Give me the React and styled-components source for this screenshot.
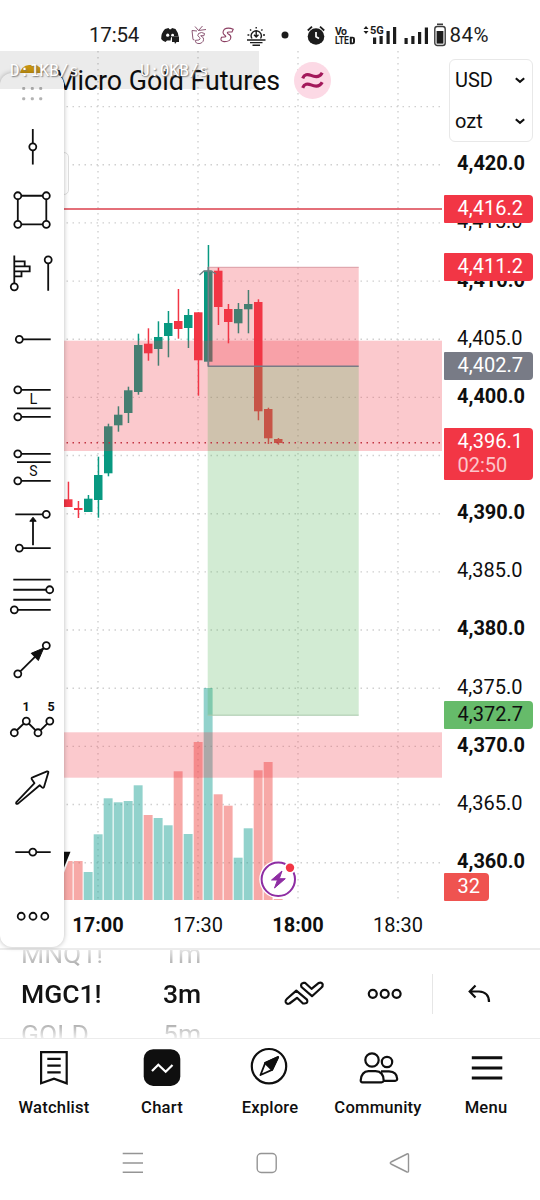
//App.jsx
import styled, { createGlobalStyle, css } from "styled-components";

const GlobalStyle = createGlobalStyle`
	* { box-sizing: border-box; }
	body {
		margin: 0;
		background-color: #fff;
		color: #0f0f0f;
		font-family: Roboto, "Liberation Sans", sans-serif;
	}
	svg { display: block; }
`;

const Screen = styled.div`
	width: 540px;
	height: 1200px;
	display: flex;
	flex-direction: column;
	overflow: hidden;
	background-color: #fff;
`;

/* ---------- status bar ---------- */

const StatusRow = styled.div`
	height: 51px;
	flex: none;
	display: flex;
	align-items: center;
	padding: 18px 0 0 88px;
	color: #1c1c1c;
`;

const StatusText = styled.span`
	font-size: 20.5px;
	line-height: 24px;
	width: ${({ $w }) => $w}px;
	margin-left: ${({ $gap }) => $gap || 0}px;
	letter-spacing: ${({ $ls }) => $ls || 0}px;
	white-space: nowrap;
`;

const StatusIcon = styled.svg`
	flex: none;
	height: 30px;
	width: ${({ $w }) => $w}px;
	margin-left: ${({ $gap }) => $gap || 0}px;
	overflow: visible;
`;

/* ---------- chart ---------- */

const ChartArea = styled.div`
	position: relative;
	height: 897px;
	flex: none;
	display: flex;
`;

const PlotColumn = styled.div`
	width: 442px;
	flex: none;
	display: flex;
	flex-direction: column;
`;

const TimeAxis = styled.div`
	flex: 1;
	display: flex;
	padding: 13px 0 0 48px;
`;

const TimeLabel = styled.span`
	width: 100px;
	flex: none;
	text-align: center;
	font-size: 20px;
	line-height: 24px;
	font-weight: ${({ $bold }) => ($bold ? 700 : 400)};
`;

const PriceAxis = styled.div`
	position: relative;
	flex: 1;
	display: flex;
	flex-direction: column;
	padding-top: 8px;
`;

const UnitBox = styled.div`
	height: 83px;
	width: 84px;
	margin-left: 7px;
	margin-bottom: 9.2px;
	padding: 0 7px 0 5px;
	border: 1.5px solid #e8e8e8;
	border-radius: 6px;
	display: flex;
	flex-direction: column;
`;

const UnitRow = styled.div`
	flex: 1;
	display: flex;
	align-items: center;
	justify-content: space-between;
	font-size: 20px;
`;

const PriceLabels = styled.div`
	display: flex;
	flex-direction: column;
	gap: 34.17px;
	padding-left: 15px;
`;

const PriceLabel = styled.span`
	height: 24px;
	line-height: 24px;
	font-size: 20px;
	font-weight: ${({ $bold }) => ($bold ? 700 : 400)};
`;

// 가격 축 위에 떠 있는 태그
const PriceTag = styled.div`
	position: absolute;
	left: 1.5px;
	top: ${({ $top }) => $top}px;
	width: ${({ $w }) => $w || 89.5}px;
	padding: 1px 0 3px 14px;
	border-radius: 1px 4px 4px 1px;
	font-size: 20px;
	line-height: 24px;
	background-color: ${({ $bg }) => $bg};
	color: ${({ $color }) => $color || "#fff"};
	small {
		display: block;
		font-size: 20px;
		line-height: 24px;
		color: #fcc5ca;
	}
`;

const TitleRow = styled.div`
	position: absolute;
	left: 54px;
	top: 11px;
	display: flex;
	align-items: center;
	gap: 14px;
`;

const Title = styled.span`
	font-size: 26.8px;
	line-height: 36px;
	padding-top: 1px;
	width: 226px;
	white-space: nowrap;
`;

const SideCard = styled.div`
	position: absolute;
	left: 40px;
	top: 101px;
	width: 29px;
	height: 43px;
	border: 1.5px solid #dedede;
	border-radius: 5px;
	background-color: #fff;
`;

const EmojiTop = styled.div`
	position: absolute;
	left: 20px;
	top: 14px;
	width: 23px;
	height: 9px;
	border-radius: 11px 11px 0 0;
	background-color: #d8a010;
`;

const ToolPanel = styled.div`
	position: absolute;
	left: 0;
	top: 22px;
	width: 64px;
	height: 874px;
	border-radius: 12px;
	background-color: #fff;
	box-shadow: 0 0 5px rgba(0, 0, 0, 0.28);
	display: flex;
	flex-direction: column;
`;

const ToolIcon = styled.svg`
	width: 64px;
	height: ${({ $h }) => $h || 64.08}px;
	flex: none;
	fill: none;
	stroke: #0f0f0f;
	stroke-width: 1.8;
	circle { fill: #fff; }
	text {
		fill: #0f0f0f;
		stroke: none;
		text-anchor: middle;
	}
`;

const SpeedStrip = styled.div`
	position: absolute;
	left: 0;
	top: 0;
	width: 259px;
	height: 38px;
	padding: 11px 0 0 10px;
	display: flex;
	background-color: rgba(0, 0, 0, 0.08);
	font-family: "DejaVu Sans Mono", monospace;
	font-size: 16px;
	line-height: 18px;
	letter-spacing: 0.2px;
	color: #fff;
	text-shadow: 1px 1px 1.5px #777;
	span {
		flex: none;
		width: 130px;
	}
`;

/* ---------- symbol bar ---------- */

const SymbolBar = styled.div`
	height: 91px;
	flex: none;
	display: flex;
	align-items: center;
	border-top: 2px solid #ececec;
	border-bottom: 1px solid #ececec;
	padding-left: 21px;
	overflow: hidden;
`;

const Wheel = styled.div`
	width: ${({ $w }) => $w}px;
	height: 88px;
	flex: none;
	display: flex;
	flex-direction: column;
	justify-content: center;
	mask-image: linear-gradient(#0003 0, #000a 18px, #000 34px, #000 58px, #000a 72px, #0002 88px);
`;

const WheelItem = styled.span`
	height: 40.3px;
	line-height: 40.3px;
	flex: none;
	font-size: 26.5px;
	white-space: nowrap;
	${({ $active }) =>
		$active
			? css`
					font-weight: 500;
					color: #131313;
			  `
			: css`
					color: #777;
			  `}
`;

const BarIcon = styled.svg`
	flex: none;
	width: ${({ $w }) => $w}px;
	height: 40px;
	margin-left: ${({ $gap }) => $gap}px;
	fill: none;
	stroke: #0f0f0f;
	stroke-width: 2.2;
`;

const BarDivider = styled.div`
	width: 1px;
	height: 40px;
	margin-left: 29px;
	background-color: #e6e6e6;
`;

/* ---------- bottom navigation ---------- */

const NavRow = styled.nav`
	display: grid;
	grid-template-columns: repeat(5, 108px);
	height: 102px;
	flex: none;
	padding-top: 8px;
`;

const NavItem = styled.div`
	display: flex;
	flex-direction: column;
	align-items: center;
	gap: 10.5px;
	font-size: 16.6px;
	font-weight: 500;
	line-height: 20px;
	letter-spacing: 0.2px;
	svg {
		width: 40px;
		height: 40px;
		fill: none;
		stroke: #0f0f0f;
		stroke-width: 2.2;
	}
`;

const SystemRow = styled.div`
	display: flex;
	gap: 109.5px;
	padding: 9.5px 0 0 121px;
	svg {
		width: 24px;
		height: 24px;
		fill: none;
		stroke: #959595;
		stroke-width: 1.4;
	}
`;

/* ---------- data ---------- */

// [x, high, bodyTop, bodyBottom, low, up]
const candles = [
	[68, 481.7, 499.3, 507, 507, 0],
	[78, 501, 508, 510, 518, 0],
	[88, 495, 498.7, 512, 512, 1],
	[98, 456.7, 475, 500, 517.7, 1],
	[108, 423.7, 426.3, 473.3, 476.3, 1],
	[118, 406.3, 414.7, 425.3, 431.7, 1],
	[128, 386.7, 390.3, 413, 423, 1],
	[138, 333.7, 345, 392, 394.7, 1],
	[148, 328.3, 343.7, 353.3, 360.7, 0],
	[158, 321.3, 337, 349, 365.7, 1],
	[168, 311, 323, 336, 357.3, 1],
	[178, 289, 321, 329, 338.7, 0],
	[188, 309, 315, 328, 348, 1],
	[198, 312.3, 312.3, 360.3, 395.7, 0],
	[208, 245, 270.7, 361.7, 366, 1],
	[218, 267, 270.7, 307, 325, 0],
	[228, 304, 309, 322, 343.3, 0],
	[238, 303, 309, 323.3, 333.3, 1],
	[248, 290, 304, 309.3, 333.3, 1],
	[258, 299.3, 302, 411.3, 420.3, 0],
	[268, 407.7, 409, 438.3, 444, 0],
	[278, 438, 439, 443, 444.7, 0],
];

// [x, top, up]
const volumes = [
	[68, 861, 0], [78, 861, 0], [88, 872, 1], [98, 834.3, 1],
	[108, 798.3, 1], [118, 802.3, 1], [128, 801, 1], [138, 785.3, 1],
	[148, 815, 0], [158, 818, 1], [168, 825.3, 1], [178, 771.3, 0],
	[188, 834, 1], [198, 742, 0], [208, 688, 1], [218, 794.3, 0],
	[228, 805.7, 0], [238, 857.7, 1], [248, 828.3, 1], [258, 770.3, 0],
	[268, 762, 0], [278, 899, 0],
];

const prices = [4420, 4415, 4410, 4405, 4400, 4395, 4390, 4385, 4380, 4375, 4370, 4365, 4360];
const gridY = Array.from({ length: 14 }, (_, i) => 106.6 + i * 58.16);
const gridX = [98, 198, 298, 398];

const formatPrice = (p) => p.toLocaleString("en-US", { minimumFractionDigits: 1 });

function Plot() {
	return (
		<svg width="442" height="849" viewBox="0 51 442 849">
			<g stroke="#d0d0d0" strokeWidth="1.4" strokeDasharray="1.5 4.5">
				{gridY.map((y) => <line key={y} x1="0.5" x2="441" y1={y} y2={y} />)}
				{gridX.map((x) => <line key={x} x1={x} x2={x} y1="51" y2="900" />)}
			</g>
			{volumes.map(([x, top, up]) => (
				<rect key={x} x={x - 4.3} y={top} width="8.9" height={900 - top}
					fill={up ? "rgba(38,166,154,.5)" : "rgba(239,83,80,.5)"} />
			))}
			{candles.map(([x, high, top, bottom, low, up]) => (
				<g key={x} fill={up ? "#089981" : "#f23645"}>
					<rect x={x - 0.3} y={high} width="1.5" height={low - high} />
					<rect x={x - 4} y={top} width="8.5" height={bottom - top} />
				</g>
			))}
			<rect x="0" y="340.7" width="442" height="110.3" fill="rgba(242,54,69,.27)" />
			<rect x="0" y="732.3" width="442" height="45.4" fill="rgba(242,54,69,.27)" />
			{/* short position */}
			<rect x="207.7" y="267.3" width="151" height="99" fill="rgba(242,54,69,.27)" />
			<rect x="207.7" y="366.3" width="151" height="349" fill="rgba(76,175,80,.25)" />
			<path d="M207.7 267.3H358.7" stroke="#d99aa3" />
			<path d="M207.7 715.2H358.7" stroke="#a9c9ab" />
			<path d="M208.3 267V366.3H358.7" fill="none" stroke="#787b86" strokeWidth="1.4" />
			<path d="M199.5 275L204 271H211L216 274" fill="none" stroke="#6f7f83" strokeWidth="1.3" />
			<path d="M0 209H442" stroke="#db3f4c" strokeWidth="1.7" />
			<path d="M0.5 442.7H442" stroke="#c23240" strokeWidth="1.5" strokeDasharray="1.5 4.5" />
			<path d="M60 850.5H72.5L62 878V850.5Z" fill="#fff" />
			<path d="M60 851.7H70.5L63 870H60Z" fill="#0f0f0f" />
			{/* news flash */}
			<circle cx="278.3" cy="879.3" r="19" fill="#fff" />
			<circle cx="278.3" cy="879.3" r="16.7" fill="#fff" stroke="#8e2da3" strokeWidth="2" />
			<path d="M282 871L271.5 880H277.5L274.5 888L285.3 878.7H279.3Z" fill="#8e2da3" stroke="#8e2da3" strokeLinejoin="round" />
			<circle cx="290" cy="867.7" r="6" fill="#fff" />
			<circle cx="290" cy="867.7" r="4.2" fill="#f23645" />
		</svg>
	);
}

const Dot = ({ x, y }) => <circle cx={x} cy={y} r="3.5" />;

function Tools() {
	return (
		<ToolPanel>
			<ToolIcon $h={42} viewBox="0 0 64 42">
				{[15.5, 25.7].map((y) =>
					[23.7, 32.3, 40.7].map((x) => (
						<rect key={x + y} x={x - 1.5} y={y - 1.5} width="3" height="3" rx="1" fill="#b3b3b3" stroke="none" />
					))
				)}
			</ToolIcon>
			<ToolIcon viewBox="0 0 64 64">
				<path d="M32.8 14V49.5" /><Dot x={32.8} y={31.8} />
			</ToolIcon>
			<ToolIcon viewBox="0 0 64 64">
				<path d="M17.8 16.7H46.3V45.3H17.8Z" />
				<Dot x={17.8} y={16.7} /><Dot x={46.3} y={16.7} /><Dot x={17.8} y={45.3} /><Dot x={46.3} y={45.3} />
			</ToolIcon>
			<ToolIcon viewBox="0 0 64 64">
				<path d="M14.3 12.5V44M14.3 18.3H24.7V23.4M14.3 23.4H29.7V28.4H14.3M21.5 28.4V33.4H14.3M48.2 17V47.7" />
				<Dot x={14.3} y={43.8} /><Dot x={48.2} y={16.8} />
			</ToolIcon>
			<ToolIcon viewBox="0 0 64 64">
				<path d="M19.3 32.3H50.7" /><Dot x={19.3} y={32.3} />
			</ToolIcon>
			<ToolIcon viewBox="0 0 64 64">
				<path d="M17.8 18.8H50.7M17 37.3H50.7M17.8 45.8H50.7" />
				<Dot x={17.8} y={18.8} /><Dot x={17.8} y={45.8} />
				<text x="33.5" y="33" fontSize="14.5">L</text>
			</ToolIcon>
			<ToolIcon viewBox="0 0 64 64">
				<path d="M17.8 18.8H50.7M17 27.1H50.7M17.8 45.8H50.7" />
				<Dot x={17.8} y={18.8} /><Dot x={17.8} y={45.8} />
				<text x="33.5" y="41.2" fontSize="14">S</text>
			</ToolIcon>
			<ToolIcon viewBox="0 0 64 64">
				<path d="M15.3 15.3H46.3M19.3 49H50.7M33 46.2V21" />
				<path d="M33 18.2L29.8 22.2H36.2Z" fill="#0f0f0f" strokeWidth="1" />
				<Dot x={46.3} y={15.3} /><Dot x={19.3} y={49} />
			</ToolIcon>
			<ToolIcon viewBox="0 0 64 64">
				<path d="M13.3 15.5H50.7M13.3 25.7H49.7M13.3 35.7H50.7M14.3 45.8H50.7" />
				<Dot x={49.7} y={25.7} /><Dot x={14.3} y={45.8} />
			</ToolIcon>
			<ToolIcon viewBox="0 0 64 64">
				<path d="M17.8 45.8L46.3 17.5" />
				<path d="M43.7 20L31.2 25.3L38.3 32.5Z" fill="#0f0f0f" strokeWidth="1" />
				<Dot x={46.3} y={17.5} /><Dot x={17.8} y={45.8} />
			</ToolIcon>
			<ToolIcon viewBox="0 0 64 64">
				<path d="M14.3 40.7L26.3 29L38 40.7L49.8 29" />
				<Dot x={14.3} y={40.7} /><Dot x={26.3} y={29} /><Dot x={38} y={40.7} /><Dot x={49.8} y={29} />
				<text x="26" y="19.2" fontSize="12.5" fontWeight="700">1</text>
				<text x="51" y="19.2" fontSize="12.5" fontWeight="700">5</text>
			</ToolIcon>
			<ToolIcon viewBox="0 0 64 64">
				<path d="M16.2 46.4L34.5 27.2L31.8 23.2Q31 21.9 32.6 21.3L47 15.4Q48.8 15 48.3 16.6L44 31Q43.2 32.4 42 31.3L39.7 29.2L18 47.6Q15.6 48.5 16.2 46.4Z" strokeLinejoin="round" />
			</ToolIcon>
			<ToolIcon viewBox="0 0 64 64">
				<path d="M15.3 32H50.7" /><Dot x={32.8} y={32} />
			</ToolIcon>
			<ToolIcon viewBox="0 0 64 64">
				<Dot x={21.2} y={32.2} /><Dot x={33} y={32.2} /><Dot x={44.8} y={32.2} />
			</ToolIcon>
		</ToolPanel>
	);
}

function StatusBar() {
	return (
		<StatusRow>
			<StatusText $w={51} $gap={1} $ls={-0.2}>17:54</StatusText>
			<StatusIcon $w={19} $gap={21} viewBox="0 0 19 30" fill="#1c1c1c">
				<path d="M4 9L7.5 8L8.5 9.3H10L11 8L14.5 9Q17.5 13 17.6 16.5H11Q9.5 17.5 9.6 20.5H6L4.5 22Q1.5 21 .2 19Q0 13 4 9Z" />
				<circle cx="6.7" cy="15.2" r="1.6" fill="#fff" />
				<circle cx="11.6" cy="15.2" r="1.4" fill="#fff" />
				<path d="M11 16.5H18V22H15.5L14 24L13.5 22H11Z" />
			</StatusIcon>
			<StatusIcon $w={17} $gap={11} viewBox="0 0 17 30" fill="none" stroke="#8d5875" strokeWidth="1">
				<path d="M4 6.5L7.5 10.5L11.5 6M7.5 10.5L15 9.5M6 11L1 10.5L2 19.5L3.5 20M13.5 13.5Q10.5 11.5 7.5 13.5Q5.5 16 8.5 17.3Q10 19 8 20L4.5 20.3Q4 24 9 23.5Q13.5 22 12.3 17.8L9.7 15.7H13Z" />
			</StatusIcon>
			<StatusIcon $w={14} $gap={12} viewBox="0 0 14 30" fill="none" stroke="#8c3f62" strokeWidth="1.1">
				<path d="M13.2 9.3Q8 7 4.3 9.3Q1.5 13 4.8 15.2Q7 16.7 4.5 17L1.5 17.3Q-.5 21 4 21.6Q10 21.8 10.8 18Q11.3 15.3 8.3 14Q6 12 9 12H12Z" />
			</StatusIcon>
			<StatusIcon $w={19} $gap={13} viewBox="0 0 19 30" fill="none" stroke="#1c1c1c" strokeWidth="1.4">
				<path d="M5 18.5A5 5 0 1 1 13.5 18.5M9.2 11V16.5M7 14.8L9.2 17L11.5 14.8M0 20H18.5M3 22.6H15.5M5.5 25.2H13M9.2 7V8.4M3 9.5L4.2 10.6M15.5 9.5L14.3 10.6M.5 15H2.3M16 15H18" />
			</StatusIcon>
			<StatusIcon $w={8} $gap={15} viewBox="0 0 8 30" fill="#1c1c1c"><circle cx="4" cy="15" r="3.5" /></StatusIcon>
			<StatusIcon $w={18} $gap={18} viewBox="0 0 18 30" fill="#1c1c1c">
				<circle cx="9" cy="16.5" r="8.3" />
				<path d="M.8 10.5L5 6.7M13 6.7L17.2 10.5" stroke="#1c1c1c" strokeWidth="1.8" />
				<path d="M9 12V16.8L12 18.5" stroke="#fff" strokeWidth="1.7" fill="none" />
			</StatusIcon>
			<StatusIcon $w={21} $gap={10} viewBox="0 0 21 30" fill="#1c1c1c" fontWeight="700" fontFamily="Roboto, sans-serif">
				<text x="0" y="14.7" fontSize="10.5" textLength="12">Vo</text>
				<text x="0" y="24.2" fontSize="10.5" textLength="14" lengthAdjust="spacingAndGlyphs">LTE</text>
				<path d="M14.8 16.7H17.5Q20 16.7 20 19V22Q20 24.2 17.5 24.2H14.8ZM16.8 18.5V22.4H18V18.5Z" fillRule="evenodd" />
			</StatusIcon>
			<StatusIcon $w={35} $gap={7} viewBox="0 0 35 30" fill="#1c1c1c">
				<path d="M.5 9L3 6L5.5 9ZM.5 11L3 14L5.5 11ZM10 17.5H13.2V24H10ZM16.5 16H19.7V24H16.5ZM23.5 11H26.7V24H23.5ZM30 7H33.2V24H30Z" />
				<text x="7" y="14" fontSize="11" fontWeight="700" fontFamily="Roboto, sans-serif">5G</text>
			</StatusIcon>
			<StatusIcon $w={25} $gap={6} viewBox="0 0 25 30" fill="#1c1c1c">
				<path d="M.5 18H3.7V24H.5ZM7.3 16H10.5V24H7.3ZM14 12H17.2V24H14ZM20.8 7.5H24V24H20.8Z" />
			</StatusIcon>
			<StatusIcon $w={12} $gap={5} viewBox="0 0 12 30" fill="none" stroke="#3c3c3c" strokeWidth="1.4">
				<rect x=".8" y="6.5" width="10.4" height="19" rx="2.5" />
				<path d="M3 4.3H9" strokeWidth="1.6" />
				<rect x="2.6" y="11" width="6.8" height="12.6" fill="#1c1c1c" stroke="none" />
			</StatusIcon>
			<StatusText $w={44} $gap={3.5} $ls={0.5}>84%</StatusText>
		</StatusRow>
	);
}

const Chevron = () => (
	<svg width="10" height="8" viewBox="0 0 10 8" fill="none" stroke="#0f0f0f" strokeWidth="2.1">
		<path d="M.8 2.2L5 5.8L9.2 2.2" />
	</svg>
);

function Chart() {
	return (
		<ChartArea>
			<PlotColumn>
				<Plot />
				<TimeAxis>
					<TimeLabel $bold>17:00</TimeLabel>
					<TimeLabel>17:30</TimeLabel>
					<TimeLabel $bold>18:00</TimeLabel>
					<TimeLabel>18:30</TimeLabel>
				</TimeAxis>
			</PlotColumn>
			<PriceAxis>
				<UnitBox>
					<UnitRow>USD <Chevron /></UnitRow>
					<UnitRow>ozt <Chevron /></UnitRow>
				</UnitBox>
				<PriceLabels>
					{prices.map((p) => (
						<PriceLabel key={p} $bold={p % 10 === 0}>{formatPrice(p)}</PriceLabel>
					))}
				</PriceLabels>
				<PriceTag $top={144} $bg="#f23645">4,416.2</PriceTag>
				<PriceTag $top={202} $bg="#f23645">4,411.2</PriceTag>
				<PriceTag $top={301} $bg="#787b86">4,402.7</PriceTag>
				<PriceTag $top={377.4} $bg="#f23645">4,396.1<small>02:50</small></PriceTag>
				<PriceTag $top={650} $bg="#66bb6a" $color="#0f0f0f">4,372.7</PriceTag>
				<PriceTag $top={822} $bg="#ef5350" $w={45.5}>32</PriceTag>
			</PriceAxis>
			<TitleRow>
				<Title>Micro Gold Futures</Title>
				<svg width="37" height="37" viewBox="0 0 37 37">
					<circle cx="18.5" cy="18.5" r="18.5" fill="#fcd9e5" />
					<path d="M8.7 16.3C10.3 12.3 13.5 11.9 17 13.4C21.5 15.4 25.5 15.8 28.2 10.8M8.7 25.8C10.3 21.8 13.5 21.4 17 22.9C21.5 24.9 25.5 25.3 28.2 20.3" fill="none" stroke="#a3195b" strokeWidth="3.2" />
				</svg>
			</TitleRow>
			<SideCard />
			<EmojiTop />
			<Tools />
			<SpeedStrip>
				<span>D:1KB/s</span>
				<span>U:0KB/s</span>
			</SpeedStrip>
		</ChartArea>
	);
}

function SymbolControls() {
	return (
		<SymbolBar>
			<Wheel $w={142}>
				<WheelItem>MNQ1!</WheelItem>
				<WheelItem $active>MGC1!</WheelItem>
				<WheelItem>GOLD</WheelItem>
			</Wheel>
			<Wheel $w={59}>
				<WheelItem>1m</WheelItem>
				<WheelItem $active>3m</WheelItem>
				<WheelItem>5m</WheelItem>
			</Wheel>
			<BarIcon $w={42} $gap={61} viewBox="283 973.5 42 40" strokeLinejoin="round">
				<path d="M296.3 990.2L307 999.2Q308.5 1002.5 304.5 1003H303L297 997.3L289.5 1003Q286.5 1004 285.6 1001.5Q285.3 999.8 287 998.3Z" />
				<path d="M312 995.7L301.5 986.5Q300 983 303.7 982.3H305L311.5 988.3L318.5 982.6Q321.5 981.5 322.7 983.8Q323 985.8 321.3 987.3Z" />
			</BarIcon>
			<BarIcon $w={36} $gap={42} viewBox="367 973.5 36 40">
				<circle cx="372.8" cy="993.3" r="4" /><circle cx="384.7" cy="993.3" r="4" /><circle cx="396.6" cy="993.3" r="4" />
			</BarIcon>
			<BarDivider />
			<BarIcon $w={26} $gap={33} viewBox="466 973.5 26 40">
				<path d="M475.5 985L469.7 991L475.5 997M470 991H479Q489 991.5 489 1001.5" />
			</BarIcon>
		</SymbolBar>
	);
}

function BottomNav() {
	return (
		<NavRow>
			<NavItem>
				<svg viewBox="34 1047 40 40">
					<path d="M41.1 1052.2H66.7V1083.3L54 1078.6L41.1 1083.3ZM47.3 1058.8H60.7M47.3 1065.7H60.7M47.3 1072.4H60.7" />
				</svg>
				Watchlist
			</NavItem>
			<NavItem>
				<svg viewBox="142 1047 40 40">
					<rect x="143.7" y="1049.3" width="36.6" height="36.6" rx="9.5" fill="#0f0f0f" stroke="none" />
					<path d="M152 1071L158.3 1064.7L165.7 1071.7L172.5 1065" stroke="#fff" strokeWidth="2.2" />
				</svg>
				Chart
			</NavItem>
			<NavItem>
				<svg viewBox="250 1047 40 40" strokeLinejoin="round">
					<circle cx="269" cy="1066.2" r="17.2" />
					<path d="M278 1057.2L265.2 1063L260.5 1075L272 1069.8Z" strokeWidth="1.9" />
					<path d="M278 1057.2L265.2 1063L272 1069.8Z" fill="#0f0f0f" />
				</svg>
				Explore
			</NavItem>
			<NavItem>
				<svg viewBox="358 1047 40 40" strokeLinejoin="round" overflow="visible">
					<circle cx="372" cy="1060" r="6.7" />
					<circle cx="387" cy="1062" r="5.2" />
					<path d="M368.5 1071.2H375.5Q383.5 1071.5 383.7 1080.5Q383.5 1082.3 381.5 1082.3H362.5Q360.6 1082.3 360.7 1080.3Q361.5 1071.5 368.5 1071.2ZM381 1071.3H389Q397 1071.7 397.2 1079Q397 1080.8 395.2 1080.8H384" />
				</svg>
				Community
			</NavItem>
			<NavItem>
				<svg viewBox="466 1047 40 40">
					<path d="M471.8 1057.7H502.3M471.8 1067.9H502.3M471.8 1078H502.3" strokeWidth="3" />
				</svg>
				Menu
			</NavItem>
		</NavRow>
	);
}

function App() {
	return (
		<>
			<GlobalStyle />
			<Screen>
				<StatusBar />
				<Chart />
				<SymbolControls />
				<BottomNav />
				<SystemRow>
					<svg viewBox="0 0 24 24"><path d="M1.7 2.5H22M1.7 12H22M1.7 21.3H22" /></svg>
					<svg viewBox="0 0 24 24"><rect x="2.2" y="2.5" width="19" height="19" rx="4" /></svg>
					<svg viewBox="0 0 24 24" strokeLinejoin="round"><path d="M3 11Q1.5 12 3 13L19 21Q20.5 21.5 20.5 20V4Q20.5 2.3 19 3Z" /></svg>
				</SystemRow>
			</Screen>
		</>
	);
}

export default App;
